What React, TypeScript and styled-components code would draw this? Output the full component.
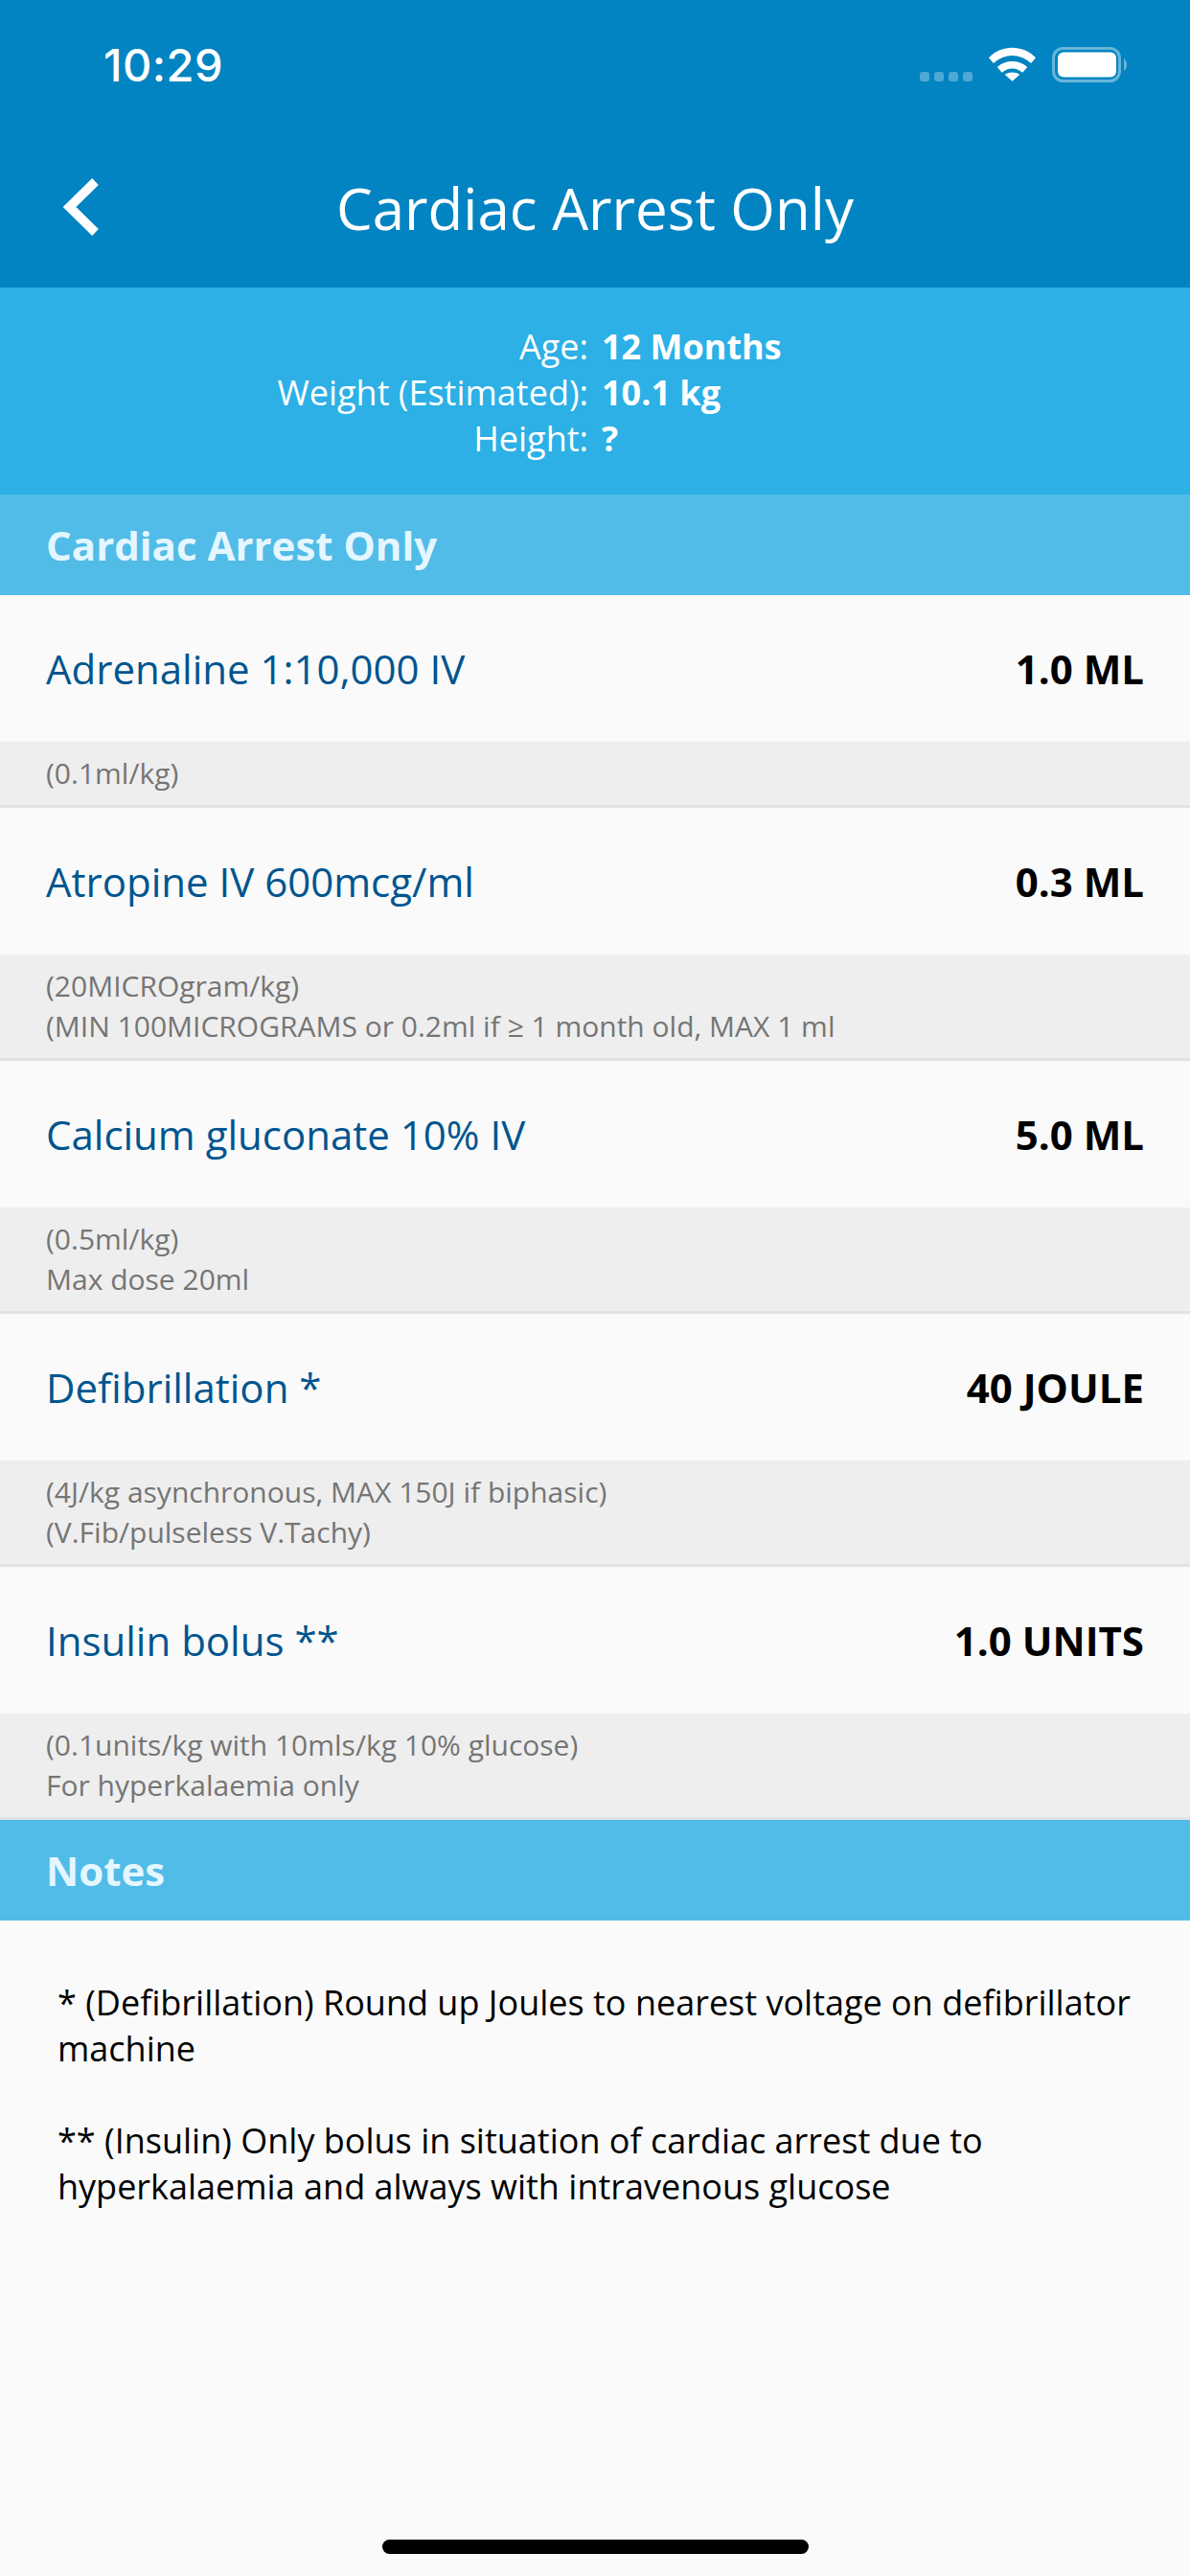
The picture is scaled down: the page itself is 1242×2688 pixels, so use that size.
import styled, { createGlobalStyle } from 'styled-components'

const GlobalStyle = createGlobalStyle`
	html, body {
		margin: 0;
		padding: 0;
		background: #fafafa;
	}
	body {
		font-family: 'Open Sans', 'Noto Sans', sans-serif;
	}
`

const Screen = styled.div`
	position: relative;
	width: 1242px;
	height: 2688px;
	display: flex;
	flex-direction: column;
	background: #fafafa;
	overflow: hidden;
`

const Header = styled.header`
	height: 300px;
	flex: none;
	background: #0284c2;
	color: #fff;
	display: flex;
	flex-direction: column;
`

const StatusBar = styled.div`
	height: 134px;
	display: flex;
	justify-content: space-between;
	align-items: center;
	padding: 0 65px 0 108px;
	box-sizing: border-box;
`

const Clock = styled.span`
	font-family: Inter, Roboto, sans-serif;
	font-size: 47px;
	font-weight: 500;
	letter-spacing: 0.5px;
`

const StatusIcons = styled.div`
	display: flex;
	align-items: center;
	gap: 17px;
`

const SignalDots = styled.svg`
	margin-top: 26px;
`

const NavBar = styled.div`
	position: relative;
	flex: 1;
	display: flex;
	align-items: center;
	justify-content: center;
`

const BackIcon = styled.svg`
	position: absolute;
	left: 63px;
	top: 51px;
`

const Title = styled.h1`
	margin: 0;
	font-size: 60px;
	font-weight: 400;
	line-height: 82px;
`

const InfoBand = styled.div`
	height: 216px;
	flex: none;
	box-sizing: border-box;
	padding-top: 38px;
	background: #2cb0e6;
	color: #fff;
	display: grid;
	grid-template-columns: 1fr 1fr;
	grid-auto-rows: 48px;
	column-gap: 14px;
	font-size: 36px;
	line-height: 48px;
`

const InfoLabel = styled.span`
	text-align: right;
`

const InfoValue = styled.span`
	font-weight: 700;
`

const SectionHeader = styled.h2`
	margin: 0;
	height: 105px;
	flex: none;
	padding-left: 48px;
	display: flex;
	align-items: center;
	background: #52bce8;
	color: #e4f6ff;
	font-size: 42px;
	font-weight: 700;
`

const DoseRow = styled.div`
	height: 153px;
	flex: none;
	padding: 0 48px;
	display: flex;
	justify-content: space-between;
	align-items: center;
	background: #fafafa;
`

const DrugName = styled.span`
	color: #00558f;
	font-size: 42px;
`

const DoseValue = styled.span`
	color: #000;
	font-size: 42px;
	font-weight: 700;
`

const DoseNote = styled.div`
	flex: none;
	box-sizing: border-box;
	padding: 12px 48px;
	background: #eee;
	border-bottom: 3px solid #e2e2e2;
	color: #757575;
	font-size: 30px;
	line-height: 42px;
`

const NotesBody = styled.div`
	padding: 62px 48px 0 60px;
	color: #000;
	font-size: 36px;
	line-height: 48px;
`

const NoteParagraph = styled.p`
	margin: 0 0 48px;
`

const HomeIndicator = styled.div`
	position: absolute;
	left: 399px;
	top: 2650px;
	width: 445px;
	height: 15px;
	border-radius: 8px;
	background: #000;
`

const doses = [
	{ name: 'Adrenaline 1:10,000 IV', dose: '1.0 ML', notes: ['(0.1ml/kg)'] },
	{
		name: 'Atropine IV 600mcg/ml',
		dose: '0.3 ML',
		notes: ['(20MICROgram/kg)', '(MIN 100MICROGRAMS or 0.2ml if ≥ 1 month old, MAX 1 ml'],
	},
	{ name: 'Calcium gluconate 10% IV', dose: '5.0 ML', notes: ['(0.5ml/kg)', 'Max dose 20ml'] },
	{
		name: 'Defibrillation *',
		dose: '40 JOULE',
		notes: ['(4J/kg asynchronous, MAX 150J if biphasic)', '(V.Fib/pulseless V.Tachy)'],
	},
	{
		name: 'Insulin bolus **',
		dose: '1.0 UNITS',
		notes: ['(0.1units/kg with 10mls/kg 10% glucose)', 'For hyperkalaemia only'],
	},
]

const StatusGlyphs = () => (
	<StatusIcons>
		<SignalDots width="55" height="10" viewBox="0 0 55 10">
			{[0, 15, 30, 45].map((x) => (
				<rect key={x} x={x} width="10" height="10" rx="3" fill="#fff" opacity="0.3" />
			))}
		</SignalDots>
		<svg width="49" height="36" viewBox="0 0 50 36">
			<path d="M0 11 C14 -3 36 -3 50 11 L45 17 C33 6 17 6 5 17 Z" fill="#fff" />
			<path d="M9 21 C18 13 32 13 41 21 L36 27 C29 21 21 21 14 27 Z" fill="#fff" />
			<path d="M17 29 C22 26 28 26 33 29 L25 36 Z" fill="#fff" />
		</svg>
		<svg width="79" height="37" viewBox="0 0 79 37">
			<rect x="1.5" y="1.5" width="69" height="34" rx="10" fill="none" stroke="#fff" strokeOpacity="0.4" strokeWidth="3" />
			<rect x="6" y="5.5" width="61" height="26" rx="6" fill="#fff" />
			<path d="M75 12 C79 14 79 23 75 25 Z" fill="#fff" fillOpacity="0.4" />
		</svg>
	</StatusIcons>
)

export default function App() {
	return (
		<Screen>
			<GlobalStyle />
			<Header>
				<StatusBar>
					<Clock>10:29</Clock>
					<StatusGlyphs />
				</StatusBar>
				<NavBar>
					<BackIcon width="42" height="62" viewBox="0 0 42 62">
						<path d="M36.5 4.5 L9.5 31 L36.5 57.5" fill="none" stroke="#fff" strokeWidth="9.5" />
					</BackIcon>
					<Title>Cardiac Arrest Only</Title>
				</NavBar>
			</Header>
			<InfoBand>
				<InfoLabel>Age:</InfoLabel>
				<InfoValue>12 Months</InfoValue>
				<InfoLabel>Weight (Estimated):</InfoLabel>
				<InfoValue>10.1 kg</InfoValue>
				<InfoLabel>Height:</InfoLabel>
				<InfoValue>?</InfoValue>
			</InfoBand>
			<SectionHeader>Cardiac Arrest Only</SectionHeader>
			{doses.map((item) => (
				<div key={item.name}>
					<DoseRow>
						<DrugName>{item.name}</DrugName>
						<DoseValue>{item.dose}</DoseValue>
					</DoseRow>
					<DoseNote>
						{item.notes.map((line) => (
							<div key={line}>{line}</div>
						))}
					</DoseNote>
				</div>
			))}
			<SectionHeader>Notes</SectionHeader>
			<NotesBody>
				<NoteParagraph>* (Defibrillation) Round up Joules to nearest voltage on defibrillator machine</NoteParagraph>
				<NoteParagraph>** (Insulin) Only bolus in situation of cardiac arrest due to hyperkalaemia and always with intravenous glucose</NoteParagraph>
			</NotesBody>
			<HomeIndicator />
		</Screen>
	)
}
